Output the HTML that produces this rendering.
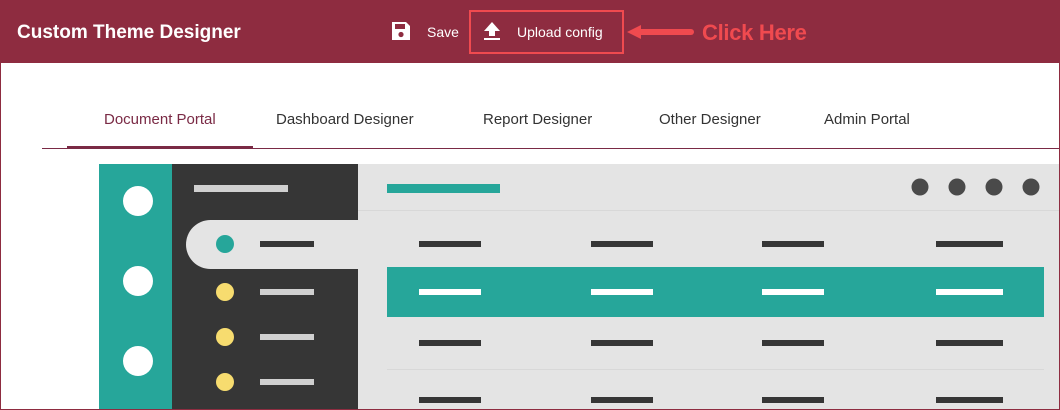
<!DOCTYPE html><html><head><style>
*{margin:0;padding:0;box-sizing:border-box}
body{width:1060px;height:410px;overflow:hidden;background:#fff;font-family:"Liberation Sans",sans-serif;position:relative}
.a{position:absolute}
.frame{left:0;top:0;width:1060px;height:410px;border:1px solid #8e2c40;border-top:none}
.hdr{left:0;top:0;width:1060px;height:63px;background:#8e2c40;color:#fff}
.tab{top:111px;font-size:15px;color:#333}
</style></head><body>
<div class="a hdr">
<div class="a" style="left:17px;top:22px;font-size:19px;font-weight:bold">Custom Theme Designer</div>
<svg class="a" style="left:391px;top:21px" width="20" height="20" viewBox="0 0 20 20"><path d="M1 1h14l4 4v14H1z" fill="#fff"/><rect x="4" y="3" width="10" height="5" fill="#8e2c40"/><circle cx="10" cy="13.5" r="2.6" fill="#8e2c40"/></svg>
<div class="a" style="left:427px;top:24px;font-size:14px">Save</div>
<div class="a" style="left:469px;top:10px;width:155px;height:44px;border:2px solid #f04a4f"></div>
<svg class="a" style="left:483px;top:21px" width="18" height="20" viewBox="0 0 18 20"><path d="M9 1L1 10h5v5h6v-5h5z" fill="#fff"/><rect x="1" y="17" width="16" height="2" fill="#fff"/></svg>
<div class="a" style="left:517px;top:24px;font-size:14px">Upload config</div>
<svg class="a" style="left:625px;top:22px" width="70" height="20" viewBox="0 0 70 20"><path d="M2 10L16 3v14z" fill="#f04a4f"/><path d="M14 10H66" stroke="#f04a4f" stroke-width="6" stroke-linecap="round"/></svg>
<div class="a" style="left:702px;top:20px;font-size:22px;font-weight:bold;color:#f04a4f;letter-spacing:-0.3px">Click Here</div>
</div>
<div class="a tab" style="left:104px;color:#7a2a45">Document Portal</div>
<div class="a tab" style="left:276px">Dashboard Designer</div>
<div class="a tab" style="left:483px">Report Designer</div>
<div class="a tab" style="left:659px">Other Designer</div>
<div class="a tab" style="left:824px">Admin Portal</div>
<div class="a" style="left:42px;top:148px;width:1018px;height:1px;background:#7a2a45"></div>
<div class="a" style="left:67px;top:146px;width:186px;height:3px;background:#7a2a45"></div>

<div class="a" style="left:99px;top:164px;width:73px;height:246px;background:#26a69a"></div>
<div class="a" style="left:172px;top:164px;width:186px;height:246px;background:#363636"></div>
<div class="a" style="left:358px;top:164px;width:701px;height:246px;background:#e4e4e4"></div>
<div class="a" style="left:358px;top:210px;width:701px;height:1px;background:#d8d8d8"></div>
<div class="a" style="left:186px;top:220px;width:172px;height:49px;background:#e4e4e4;border-radius:25px 0 0 25px"></div>
<div class="a" style="left:387px;top:267px;width:657px;height:50px;background:#26a69a"></div>
<div class="a" style="left:387px;top:369px;width:657px;height:1px;background:#d8d8d8"></div>
<div class="a" style="left:387px;top:184px;width:113px;height:9px;background:#26a69a"></div>
<div class="a" style="left:194px;top:185px;width:94px;height:7px;background:#d0d0d0"></div>
<svg class="a" style="left:0;top:0" width="1060" height="410">
<g fill="#fff"><circle cx="138" cy="201" r="15"/><circle cx="138" cy="281" r="15"/><circle cx="138" cy="361" r="15"/></g>
<circle cx="225" cy="244" r="9" fill="#26a69a"/>
<g fill="#f7dc6f"><circle cx="225" cy="292" r="9"/><circle cx="225" cy="337" r="9"/><circle cx="225" cy="382" r="9"/></g>
<rect x="260" y="241" width="54" height="6" fill="#363636"/>
<g fill="#d0d0d0"><rect x="260" y="289" width="54" height="6"/><rect x="260" y="334" width="54" height="6"/><rect x="260" y="379" width="54" height="6"/></g>
<g fill="#4a4a4a"><circle cx="920" cy="187" r="8.5"/><circle cx="957" cy="187" r="8.5"/><circle cx="994" cy="187" r="8.5"/><circle cx="1031" cy="187" r="8.5"/></g>
<g fill="#363636">
<rect x="419" y="241" width="62" height="6"/><rect x="591" y="241" width="62" height="6"/><rect x="762" y="241" width="62" height="6"/><rect x="936" y="241" width="67" height="6"/>
<rect x="419" y="340" width="62" height="6"/><rect x="591" y="340" width="62" height="6"/><rect x="762" y="340" width="62" height="6"/><rect x="936" y="340" width="67" height="6"/>
<rect x="419" y="397" width="62" height="6"/><rect x="591" y="397" width="62" height="6"/><rect x="762" y="397" width="62" height="6"/><rect x="936" y="397" width="67" height="6"/>
</g>
<g fill="#fff"><rect x="419" y="289" width="62" height="6"/><rect x="591" y="289" width="62" height="6"/><rect x="762" y="289" width="62" height="6"/><rect x="936" y="289" width="67" height="6"/></g>
</svg>
<div class="a frame"></div>
</body></html>
